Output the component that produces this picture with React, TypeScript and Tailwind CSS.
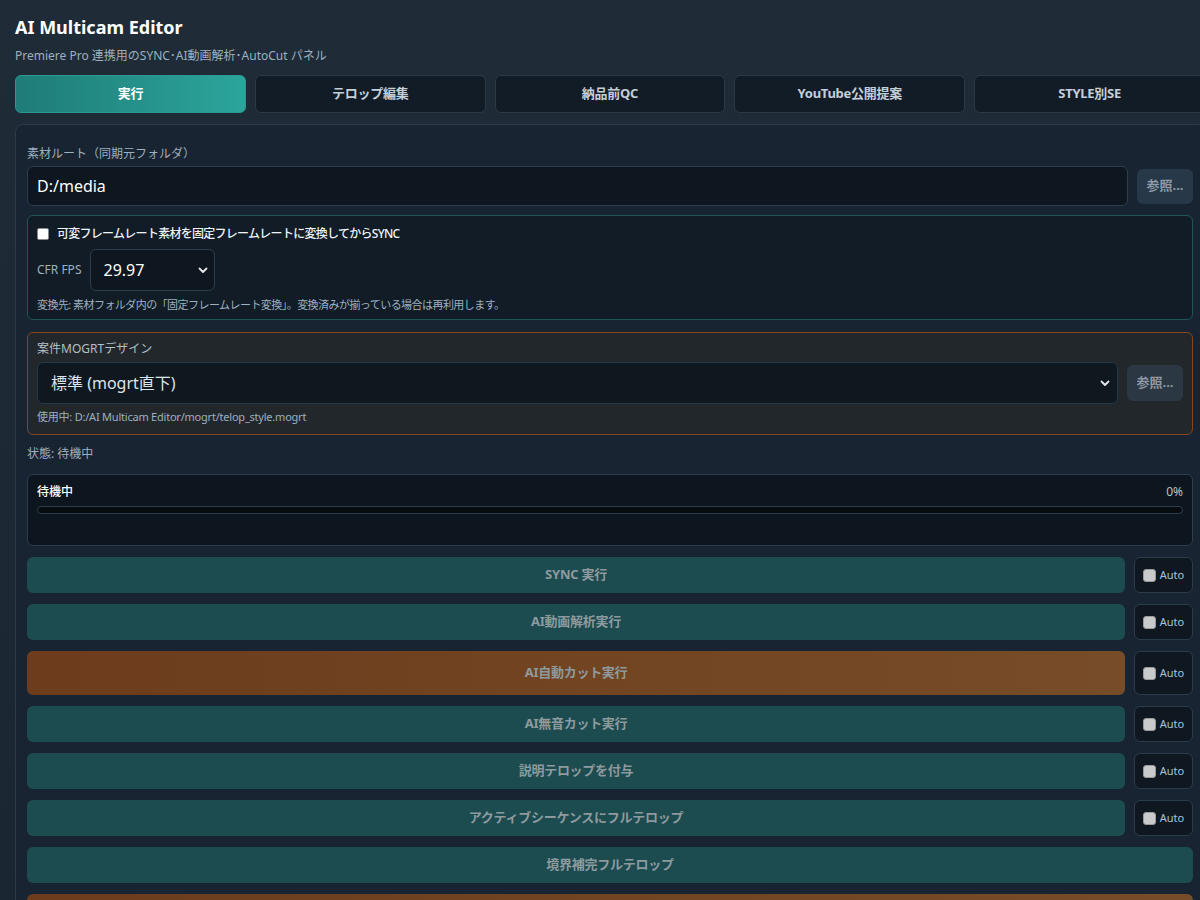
import React from "react";

const font = { fontFamily: '"Noto Sans", "Noto Sans CJK JP", sans-serif' };

function Chevron() {
  return (
    <svg width="12" height="12" viewBox="0 0 12 12" className="shrink-0">
      <path d="M2.5 4.5 L6 8 L9.5 4.5" fill="none" stroke="#e5e7eb" strokeWidth="1.8" strokeLinecap="round" strokeLinejoin="round" />
    </svg>
  );
}

function AutoBox({ h }: { h: string }) {
  return (
    <div className={`w-[59px] ${h} shrink-0 rounded-[6px] border border-[#2a3b4a] bg-[#0f1821] flex items-center justify-center gap-[4px]`}>
      <span className="w-[13px] h-[13px] rounded-[3px] bg-[#c9cacc] border border-[#9a9a9a]" />
      <span className="text-[11px] text-[#a9c3d6]">Auto</span>
    </div>
  );
}

function ActionRow({ label, orange, auto = true }: { label: string; orange?: boolean; auto?: boolean }) {
  const h = orange ? "h-[44px]" : "h-[36px]";
  return (
    <div className="flex gap-[9px]">
      <div
        className={`flex-1 ${h} rounded-[6px] flex items-center justify-center text-[13px] font-bold tracking-[-0.02em] text-[#8d9a9e] ${
          orange ? "bg-gradient-to-r from-[#6c3c1c] to-[#774c28]" : "bg-[#1c4b50]"
        }`}
      >
        {label}
      </div>
      {auto && <AutoBox h={h} />}
    </div>
  );
}

export default function App() {
  const tabs = ["実行", "テロップ編集", "納品前QC", "YouTube公開提案", "STYLE別SE"];
  return (
    <div className="w-[1200px] h-[900px] overflow-hidden bg-gradient-to-b from-[#1f2c38] to-[#1a2631] text-[#e5edf3]" style={font}>
      <div className="w-[1220px] pl-[15px] pt-[14px]">
        <div className="w-[1190px]">
          <h1 className="text-[18px] font-bold leading-[26px] text-white">AI Multicam Editor</h1>
          <p className="mt-[8px] text-[12px] leading-[16px] text-[#9eb0bf]">Premiere Pro 連携用のSYNC･AI動画解析･AutoCut パネル</p>

          <div className="mt-[11px] grid grid-cols-5 gap-[9px]">
            {tabs.map((t, i) => (
              <div
                key={t}
                className={`h-[38px] rounded-[6px] flex items-center justify-center text-[13px] font-bold tracking-[-0.02em] ${
                  i === 0
                    ? "bg-gradient-to-r from-[#1f7c77] to-[#2ba59b] text-white border border-[#2a9a90]"
                    : "bg-[#121c27] border border-[#2b3a48] text-[#c3cfd9]"
                }`}
              >
                {t}
              </div>
            ))}
          </div>

          <div className="mt-[11px] rounded-[8px] border border-[#2a3a48] bg-[#182431] px-[11px] pt-[21px] pb-[20px]">
            <div className="text-[12px] leading-[16px] text-[#9eb0bf]">素材ルート（同期元フォルダ）</div>
            <div className="mt-[4px] flex gap-[9px] items-center">
              <div className="flex-1 h-[40px] rounded-[6px] border border-[#2c3e4e] bg-[#0e161f] flex items-center px-[9px] text-[16px] text-white">
                D:/media
              </div>
              <div className="w-[56px] h-[35px] rounded-[6px] bg-[#273848] flex items-center justify-center text-[13px] font-bold text-[#8e9ba7]">
                参照...
              </div>
            </div>

            <div className="mt-[9px] rounded-[6px] border border-[#1d5757] bg-[#111c26] px-[9px] pt-[9px] pb-[7px]">
              <div className="flex items-center gap-[8px]">
                <span className="w-[12px] h-[12px] rounded-[2px] bg-white border border-[#8a8a8a]" />
                <span className="text-[12px] font-medium tracking-[-0.06em] text-[#eef3f7]">可変フレームレート素材を固定フレームレートに変換してからSYNC</span>
              </div>
              <div className="mt-[6px] flex items-center gap-[9px]">
                <span className="text-[12px] text-[#9eb0bf]">CFR FPS</span>
                <div className="w-[125px] h-[42px] rounded-[6px] border border-[#2c3e4e] bg-[#0e161f] flex items-center justify-between pl-[12px] pr-[5px] text-[16px] text-white">
                  <span>29.97</span>
                  <Chevron />
                </div>
              </div>
              <div className="mt-[6px] text-[11px] leading-[15px] tracking-[-0.05em] text-[#9eb0bf]">変換先: 素材フォルダ内の「固定フレームレート変換」。変換済みが揃っている場合は再利用します。</div>
            </div>

            <div className="mt-[12px] rounded-[6px] border border-[#87461b] bg-[#22272c] px-[9px] pt-[8px] pb-[10px]">
              <div className="text-[12px] leading-[16px] text-[#b4bfc8]">案件MOGRTデザイン</div>
              <div className="mt-[5px] flex gap-[9px] items-center">
                <div className="flex-1 h-[42px] rounded-[6px] border border-[#24384a] bg-[#0f171f] flex items-center justify-between pl-[13px] pr-[6px] text-[16px] text-[#dde4ea]">
                  <span>標準 (mogrt直下)</span>
                  <Chevron />
                </div>
                <div className="w-[56px] h-[36px] rounded-[6px] bg-[#2b3743] flex items-center justify-center text-[13px] font-bold text-[#8e9ba7]">
                  参照...
                </div>
              </div>
              <div className="mt-[5px] text-[11px] leading-[15px] tracking-[-0.02em] text-[#9eb0bf]">使用中: D:/AI Multicam Editor/mogrt/telop_style.mogrt</div>
            </div>

            <div className="mt-[11px] text-[12px] leading-[16px] text-[#9eb0bf]">状態: 待機中</div>

            <div className="mt-[12px] h-[72px] rounded-[6px] border border-[#2c3e4e] bg-[#0d161e] px-[9px] pt-[9px]">
              <div className="flex justify-between text-[12px] leading-[16px]">
                <span className="font-medium text-white">待機中</span>
                <span className="text-[#b5c4d0]">0%</span>
              </div>
              <div className="mt-[6px] h-[8px] rounded-full border border-[#2c3e4e] bg-[#070c11]" />
            </div>

            <div className="mt-[11px] flex flex-col gap-[11px]">
              <ActionRow label="SYNC 実行" />
              <ActionRow label="AI動画解析実行" />
              <ActionRow label="AI自動カット実行" orange />
              <ActionRow label="AI無音カット実行" />
              <ActionRow label="説明テロップを付与" />
              <ActionRow label="アクティブシーケンスにフルテロップ" />
              <ActionRow label="境界補完フルテロップ" auto={false} />
              <ActionRow label="" orange auto={false} />
            </div>
          </div>
        </div>
      </div>
    </div>
  );
}
